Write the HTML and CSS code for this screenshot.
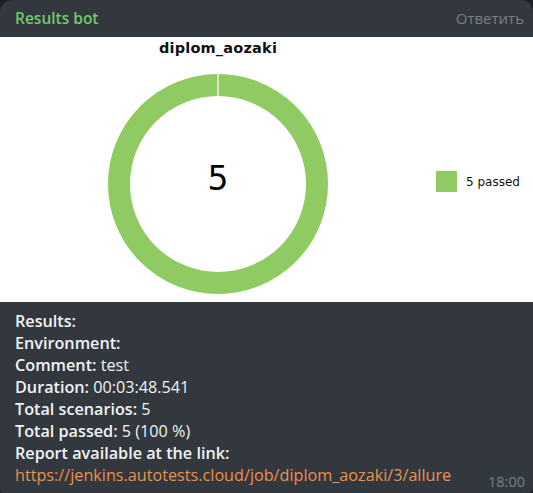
FILE: index.html
```html
<!DOCTYPE html>
<html>
<head>
<meta charset="utf-8">
<link rel="stylesheet" href="styles.css">
</head>
<body>
<div class="bubble">
  <div class="header">
    <span class="author">Results bot</span>
    <span class="reply">Ответить</span>
  </div>
  <div class="chart">
    <div class="plot">
      <div class="title">diplom_aozaki</div>
      <div class="donut">
        <svg width="222" height="222" viewBox="0 0 222 222">
          <circle cx="111" cy="111" r="99" fill="none" stroke="#8fca62" stroke-width="22"/>
          <line x1="111" y1="0" x2="111" y2="23" stroke="#ffffff" stroke-width="1.2"/>
        </svg>
        <span class="count">5</span>
      </div>
    </div>
    <div class="legend">
      <span class="swatch"></span>
      <span class="legend-text">5 passed</span>
    </div>
  </div>
  <div class="text">
    <div><b>Results:</b></div>
    <div><b>Environment:</b></div>
    <div><b>Comment:</b> test</div>
    <div><b>Duration:</b> 00:03:48.541</div>
    <div><b>Total scenarios:</b> 5</div>
    <div><b>Total passed:</b> 5 (100 %)</div>
    <div><b>Report available at the link:</b></div>
    <div class="last"><a class="link">https://jenkins.autotests.cloud/job/diplom_aozaki/3/allure</a><span class="time">18:00</span></div>
  </div>
</div>
</body>
</html>
```

FILE: styles.css
```css
html, body {
  margin: 0;
  padding: 0;
  background: #1d2024;
}
body {
  width: 533px;
  height: 493px;
  overflow: hidden;
  font-family: "Open Sans", "Noto Sans", sans-serif;
}
.bubble {
  width: 533px;
  height: 493px;
  background: #33373e;
  border-radius: 12px 12px 6px 4px;
  overflow: hidden;
  box-sizing: border-box;
}
.header {
  height: 37px;
  display: flex;
  align-items: center;
  justify-content: space-between;
  padding: 0 9px 0 15px;
}
.author {
  color: #6fcb6d;
  font-size: 15.5px;
  font-weight: 600;
  margin-top: -2px;
}
.reply {
  color: #7a7f86;
  font-size: 15px;
  margin-top: -2px;
}
.chart {
  background: #ffffff;
  height: 265px;
  display: flex;
  align-items: flex-start;
}
.plot {
  width: 222px;
  margin-left: 107px;
  display: flex;
  flex-direction: column;
  align-items: center;
}
.title {
  font-family: "DejaVu Sans", sans-serif;
  font-weight: bold;
  font-size: 14.5px;
  color: #111;
  margin-top: 3px;
  height: 21px;
  letter-spacing: 0.2px;
}
.donut {
  position: relative;
  width: 222px;
  height: 222px;
  margin-top: 12px;
}
.donut svg { display: block; }
.count {
  position: absolute;
  left: 0;
  right: 0;
  top: 87px;
  text-align: center;
  font-family: "DejaVu Sans", sans-serif;
  font-size: 33px;
  line-height: 38px;
  color: #000;
}
.legend {
  display: flex;
  align-items: center;
  margin-left: 107px;
  margin-top: 134px;
}
.swatch {
  width: 21px;
  height: 21px;
  background: #8fca62;
  display: inline-block;
}
.legend-text {
  font-family: "DejaVu Sans", sans-serif;
  font-size: 12px;
  color: #111;
  margin-left: 9px;
}
.text {
  padding: 8px 8px 0 15px;
  color: #f2f3f5;
  font-size: 16.2px;
  line-height: 22px;
}
.text b { font-weight: 600; }
.last {
  display: flex;
  justify-content: space-between;
  align-items: baseline;
}
.link {
  color: #e8924e;
}
.time {
  color: #6f8394;
  font-size: 14.5px;
  position: relative;
  top: 6px;
}
```
